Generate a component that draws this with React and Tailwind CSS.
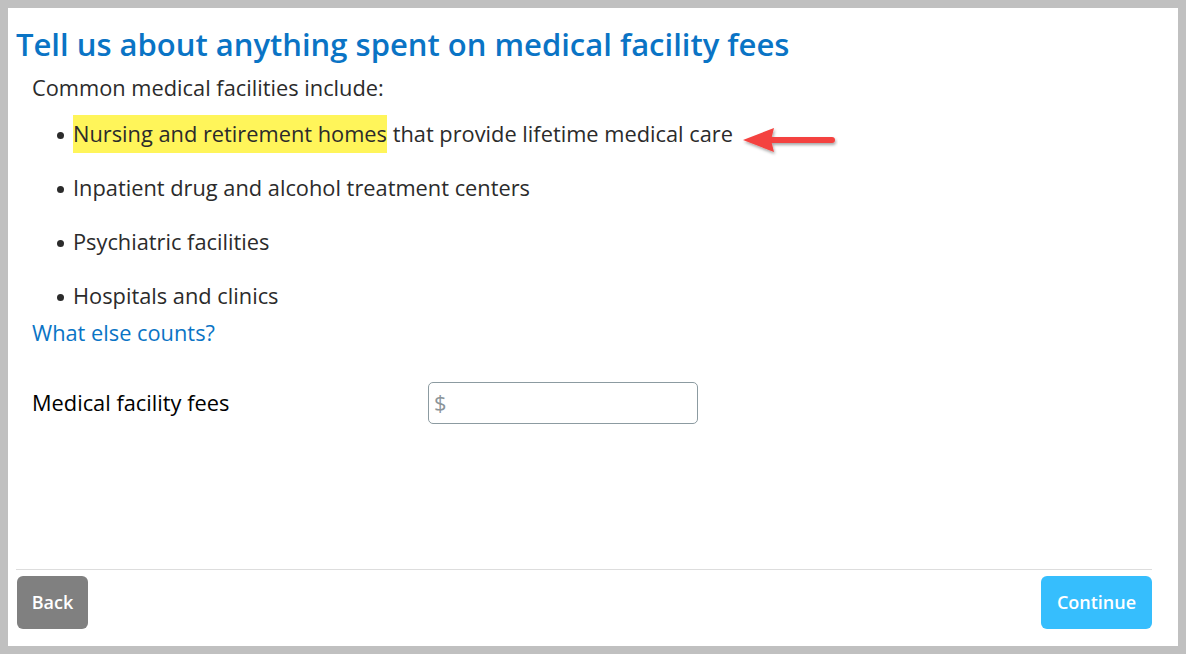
import React from 'react'

function Arrow() {
  return (
    <svg width="100" height="40" viewBox="0 0 100 40" className="absolute left-[682px] top-[13px]">
      <defs>
        <filter id="sh" x="-20%" y="-40%" width="140%" height="180%">
          <feDropShadow dx="1" dy="2" stdDeviation="1.5" floodColor="#000" floodOpacity="0.35" />
        </filter>
      </defs>
      <g filter="url(#sh)">
        <line x1="30" y1="20" x2="94" y2="20" stroke="#f4433f" strokeWidth="6" strokeLinecap="round" />
        <polygon points="5,20 36,8 33,20 36,32" fill="#f4433f" />
      </g>
    </svg>
  )
}

function Dot() {
  return <span className="w-[7px] h-[7px] rounded-full bg-[#2b2b2b] ml-[1px] mr-[9px] mt-[2px] shrink-0" />
}

export default function App() {
  const items = [
    'Inpatient drug and alcohol treatment centers',
    'Psychiatric facilities',
    'Hospitals and clinics',
  ]
  return (
    <div className="w-[1186px] h-[654px] bg-[#c0c0c0] p-2" style={{ fontFamily: '"Open Sans", "Noto Sans", sans-serif' }}>
      <div className="h-full bg-white flex flex-col px-2">
        <h1 className="text-[31px] font-semibold text-[#0a74c5] mt-[16px] leading-[40px]">
          Tell us about anything spent on medical facility fees
        </h1>
        <div className="px-4 text-[21.8px] text-[#2b2b2b]">
          <p className="mt-[9px] leading-[30px]">Common medical facilities include:</p>
          <ul className="mt-[4px] pl-[24px]">
            <li className="relative flex items-center h-[54px]">
              <Dot />
              <span className="bg-[#fff55a] py-[3px]">Nursing and retirement homes</span>
              <span>&nbsp;that provide lifetime medical care</span>
              <Arrow />
            </li>
            {items.map((t) => (
              <li key={t} className="flex items-center h-[54px]">
                <Dot />
                <span>{t}</span>
              </li>
            ))}
          </ul>
          <a className="block text-[#0a74c5] leading-[30px] mt-[-5px]">What else counts?</a>
          <div className="flex items-center mt-[34px]">
            <label className="w-[396px] text-black">Medical facility fees</label>
            <div className="w-[270px] h-[42px] border border-[#8c9ba1] rounded-[5px] flex items-center px-[5px] text-[#8b9499]">
              $
            </div>
          </div>
        </div>
        <div className="flex-1" />
        <div className="border-t border-[#dddddd] mr-[18px] mb-[17px] pt-[6px] flex justify-between text-[18px] font-semibold text-white">
          <button className="w-[71px] h-[53px] ml-[1px] bg-[#808080] rounded-[6px]">Back</button>
          <button className="w-[111px] h-[53px] bg-[#36befd] rounded-[6px]">Continue</button>
        </div>
      </div>
    </div>
  )
}
